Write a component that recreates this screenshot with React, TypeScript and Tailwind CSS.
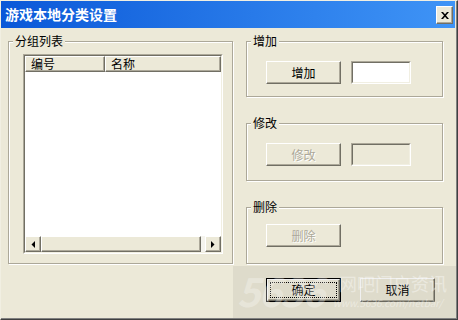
import React from "react";

const raised =
  "border border-t-white border-l-white border-r-[#716F64] border-b-[#716F64] shadow-[inset_-1px_-1px_0_#ACA899]";

function GroupBox({
  title,
  className,
  children,
}: {
  title: string;
  className?: string;
  children?: React.ReactNode;
}) {
  return (
    <fieldset
      className={`border border-[#ACA899] shadow-[inset_1px_1px_0_#fff,1px_1px_0_#fff] ${className ?? ""}`}
    >
      <legend className="ml-[4px] px-[2px] h-[14px] leading-[14px] text-[12px] text-black bg-[#ECE9D8] relative">
        {title}
      </legend>
      {children}
    </fieldset>
  );
}

function Btn({
  label,
  disabled,
  focused,
  className,
}: {
  label: string;
  disabled?: boolean;
  focused?: boolean;
  className?: string;
}) {
  if (focused) {
    return (
      <div className={`border border-black ${className ?? ""}`}>
        <div className={`${raised} h-full flex items-center justify-center p-[2px]`}>
          <div className="w-full h-full border border-dotted border-black flex items-center justify-center text-[12px] text-black">
            {label}
          </div>
        </div>
      </div>
    );
  }
  return (
    <div
      className={`${raised} flex items-center justify-center text-[12px] ${
        disabled ? "text-[#ACA899] [text-shadow:1px_1px_0_#fff]" : "text-black"
      } ${className ?? ""}`}
    >
      {label}
    </div>
  );
}

function Field({ disabled }: { disabled?: boolean }) {
  return (
    <div className="w-[60px] h-[23px] border border-t-[#ACA899] border-l-[#ACA899] border-r-white border-b-white">
      <div
        className={`w-full h-full border border-t-[#716F64] border-l-[#716F64] border-r-[#F1EFE2] border-b-[#F1EFE2] ${
          disabled ? "bg-[#ECE9D8]" : "bg-white"
        }`}
      />
    </div>
  );
}

function Arrow({ dir }: { dir: "left" | "right" }) {
  return (
    <div className={`${raised} w-[16px] h-[16px] bg-[#ECE9D8] flex items-center justify-center`}>
      <svg width="4" height="7" viewBox="0 0 4 7">
        {dir === "left" ? (
          <polygon points="4,0 4,7 0.5,3.5" fill="#000" />
        ) : (
          <polygon points="0,0 0,7 3.5,3.5" fill="#000" />
        )}
      </svg>
    </div>
  );
}

function ListView() {
  return (
    <div className="mt-[6px] ml-[14px] w-[200px] h-[200px] border border-t-[#ACA899] border-l-[#ACA899] border-r-white border-b-white">
      <div className="w-full h-full border border-t-[#716F64] border-l-[#716F64] border-r-[#F1EFE2] border-b-[#F1EFE2] bg-white flex flex-col">
        <div className="flex h-[16px] text-[12px] leading-[14px] text-black">
          <div className={`${raised} w-[80px] bg-[#ECE9D8] pl-[5px]`}>编号</div>
          <div className={`${raised} flex-1 bg-[#ECE9D8] pl-[5px]`}>名称</div>
        </div>
        <div className="flex-1" />
        <div className="flex h-[16px] bg-[#F5F4EE]">
          <Arrow dir="left" />
          <div className={`${raised} w-[160px] bg-[#ECE9D8]`} />
          <div className="flex-1" />
          <Arrow dir="right" />
        </div>
      </div>
    </div>
  );
}

export default function App() {
  return (
    <div
      className="w-[458px] h-[320px] bg-[#ECE9D8] border-t border-l border-t-[#F1EFE2] border-l-[#F1EFE2] border-r border-b border-r-[#404040] border-b-[#404040] overflow-hidden relative"
      style={{ fontFamily: '"Noto Sans CJK SC", "Liberation Sans", sans-serif' }}
    >
      <div className="w-full h-full border-r border-b border-r-[#808080] border-b-[#808080] pr-[1px] pb-[1px] flex flex-col">
        {/* title bar */}
        <div className="h-[27px] bg-gradient-to-r from-[#0A58D8] to-[#3F94F6] flex items-center justify-between pl-[4px] pr-[2px]">
          <span className="text-white font-bold text-[14px] leading-none pb-[2px]">游戏本地分类设置</span>
          <div className={`${raised} w-[17px] h-[18px] bg-[#ECE9D8] flex items-center justify-center mt-[1px]`}>
            <svg width="8" height="7" viewBox="0 0 8 7">
              <path d="M0 0 L2 0 L4 2.2 L6 0 L8 0 L5 3.5 L8 7 L6 7 L4 4.8 L2 7 L0 7 L3 3.5 Z" fill="#000" />
            </svg>
          </div>
        </div>

        {/* main */}
        <div className="flex pl-[7px] pt-[6px] gap-[13px]">
          <GroupBox title="分组列表" className="w-[225px] h-[230px]">
            <ListView />
          </GroupBox>

          <div className="w-[197px] flex flex-col gap-[19px]">
            <GroupBox title="增加" className="h-[63px]">
              <div className="flex gap-[10px] mt-[13px] ml-[19px]">
                <Btn label="增加" className="w-[75px] h-[23px] bg-[#ECE9D8]" />
                <Field />
              </div>
            </GroupBox>
            <GroupBox title="修改" className="h-[65px]">
              <div className="flex gap-[10px] mt-[13px] ml-[19px]">
                <Btn label="修改" disabled className="w-[75px] h-[23px] bg-[#ECE9D8]" />
                <Field disabled />
              </div>
            </GroupBox>
            <GroupBox title="删除" className="h-[64px]">
              <div className="flex mt-[10px] ml-[19px]">
                <Btn label="删除" disabled className="w-[75px] h-[23px] bg-[#ECE9D8]" />
              </div>
            </GroupBox>
          </div>
        </div>

        {/* footer */}
        <div className="flex justify-end gap-[19px] pr-[20px] mt-[14px]">
          <Btn label="确定" focused className="w-[75px] h-[24px] bg-[#ECE9D8]" />
          <Btn label="取消" className="w-[75px] h-[24px] bg-[#ECE9D8]" />
        </div>
      </div>

      {/* watermark overlay */}
      <div className="absolute left-[232px] top-[265px] w-[223px] h-[52px] bg-[#000]/[0.06] pointer-events-none overflow-hidden">
        <span className="absolute left-[4px] top-[4px] text-[40px] font-bold italic leading-none text-white/30 tracking-[-2px]">
          5636
        </span>
        <span className="absolute left-[106px] top-[8px] text-[18px] leading-none text-white/40">
          网吧门户资讯
        </span>
        <span className="absolute left-[100px] top-[32px] text-[10px] italic leading-none text-white/40">
          www.5636.com/netbar/
        </span>
      </div>
    </div>
  );
}
